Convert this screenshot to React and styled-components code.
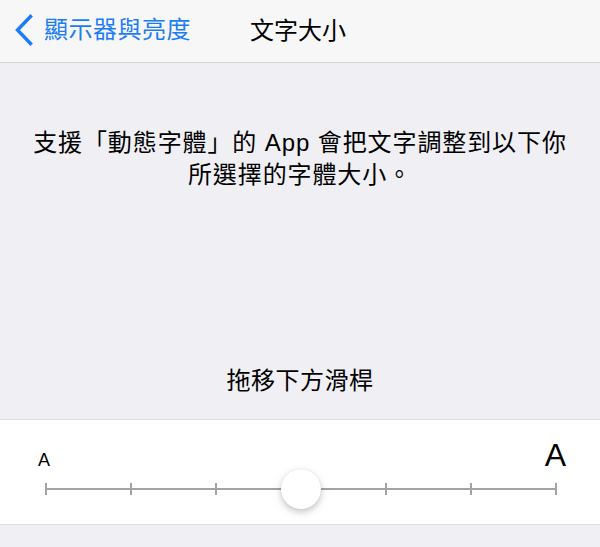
import React from "react";
import styled, { createGlobalStyle } from "styled-components";

const Global = createGlobalStyle`
  html, body { margin: 0; padding: 0; background: #efeff4; }
  body {
    width: 600px; height: 547px; overflow: hidden;
    font-family: "Liberation Sans", "Noto Sans CJK TC", sans-serif;
    -webkit-font-smoothing: antialiased;
  }
`;

const Page = styled.div`
  width: 600px;
  height: 547px;
  background: #efeff4;
  display: flex;
  flex-direction: column;
`;

const NavBar = styled.header`
  height: 62px;
  background: #f7f7f8;
  border-bottom: 1px solid #d6d6da;
  display: flex;
  align-items: center;
  position: relative;
  flex-shrink: 0;
`;

const BackButton = styled.div`
  display: flex;
  align-items: center;
  gap: 10px;
  padding-left: 14px;
  color: #1a7cf7;
  font-size: 24px;
  line-height: 32px;
  margin-top: -3px;
  letter-spacing: 0.5px;
`;

const Title = styled.div`
  position: absolute;
  left: 250px;
  top: 0;
  height: 62px;
  display: flex;
  align-items: center;
  font-size: 24px;
  color: #000;
  margin-top: -3px;
`;

const Description = styled.p`
  margin: 64px 30px 0;
  text-align: center;
  font-size: 24px;
  line-height: 32px;
  letter-spacing: 0.9px;
  color: #000;
`;

const Hint = styled.div`
  margin-top: 174px;
  text-align: center;
  font-size: 24px;
  line-height: 32px;
  letter-spacing: 0.5px;
  color: #000;
`;

const Section = styled.section`
  margin-top: 22px;
  background: #fff;
  border-top: 1px solid #dcdce0;
  border-bottom: 1px solid #dcdce0;
  padding: 19px 34px 15px 38px;
`;

const Labels = styled.div`
  display: flex;
  justify-content: space-between;
  align-items: baseline;
  height: 32px;
  line-height: 32px;
  color: #000;
`;

const Letter = styled.span`
  font-family: "Liberation Sans", sans-serif;
  font-size: ${(p) => p.$size}px;
`;

const Slider = styled.div`
  position: relative;
  height: 40px;
  margin: -2px 9px 0 7px;
  display: flex;
  align-items: center;
`;

const Track = styled.div`
  position: relative;
  flex: 1;
  height: 12px;
  display: flex;
  justify-content: space-between;
  align-items: center;
  &::before {
    content: "";
    position: absolute;
    left: 0;
    right: 0;
    top: 5px;
    height: 2px;
    background: #a3a3a6;
  }
`;

const Tick = styled.span`
  width: 2px;
  height: 12px;
  background: #a3a3a6;
  position: relative;
`;

const Thumb = styled.div`
  position: absolute;
  left: 50%;
  top: 0;
  width: 40px;
  height: 40px;
  margin-left: -20px;
  border-radius: 50%;
  background: #fff;
  box-shadow: 0 3px 6px rgba(0, 0, 0, 0.18), 0 0 1px rgba(0, 0, 0, 0.15),
    0 3px 14px rgba(0, 0, 0, 0.06);
`;

export default function App() {
  return (
    <Page>
      <Global />
      <NavBar>
        <BackButton>
          <svg width="20" height="32" viewBox="0 0 20 32">
            <path
              d="M16.5 2.5 L3.5 16 L16.5 29.5"
              fill="none"
              stroke="#1a7cf7"
              strokeWidth="3.4"
              strokeLinecap="square"
              strokeLinejoin="miter"
            />
          </svg>
          <span>顯示器與亮度</span>
        </BackButton>
        <Title>文字大小</Title>
      </NavBar>
      <Description>
        支援「動態字體」的 App 會把文字調整到以下你所選擇的字體大小。
      </Description>
      <Hint>拖移下方滑桿</Hint>
      <Section>
        <Labels>
          <Letter $size={18}>A</Letter>
          <Letter $size={32}>A</Letter>
        </Labels>
        <Slider>
          <Track>
            {Array.from({ length: 7 }).map((_, i) => (
              <Tick key={i} />
            ))}
          </Track>
          <Thumb />
        </Slider>
      </Section>
    </Page>
  );
}
